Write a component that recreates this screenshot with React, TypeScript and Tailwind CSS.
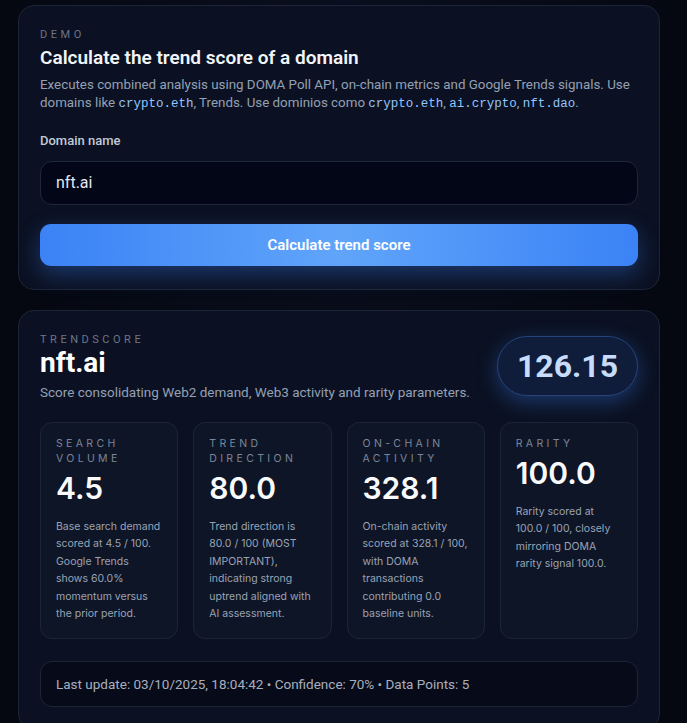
import React from "react";

const metrics = [
  {
    label: ["SEARCH", "VOLUME"],
    value: "4.5",
    text: "Base search demand scored at 4.5 / 100. Google Trends shows 60.0% momentum versus the prior period.",
  },
  {
    label: ["TREND", "DIRECTION"],
    value: "80.0",
    text: "Trend direction is 80.0 / 100 (MOST IMPORTANT), indicating strong uptrend aligned with AI assessment.",
  },
  {
    label: ["ON-CHAIN", "ACTIVITY"],
    value: "328.1",
    text: "On-chain activity scored at 328.1 / 100, with DOMA transactions contributing 0.0 baseline units.",
  },
  {
    label: ["RARITY"],
    value: "100.0",
    text: "Rarity scored at 100.0 / 100, closely mirroring DOMA rarity signal 100.0.",
  },
];

function Code({ children }: { children: React.ReactNode }) {
  return (
    <span className="font-['Liberation_Mono',monospace] text-[12.5px] text-[#93c5fd]">
      {children}
    </span>
  );
}

export default function App() {
  return (
    <div className="min-h-screen bg-[radial-gradient(ellipse_at_top,#0a0f1f,#050811_70%)] px-[18px] pt-[5px] pb-8 font-['Roboto',sans-serif] text-white">
      {/* Demo form */}
      <section className="w-[642px] rounded-[16px] border border-[#1c2536] bg-[#0b1122] px-[21px] pt-[22px] pb-[23px]">
        <div className="text-[11px] leading-[14px] tracking-[0.32em] text-[#6b7588]">DEMO</div>
        <h1 className="mt-[3px] text-[19px] leading-[26px] font-semibold text-[#f1f5f9]">
          Calculate the trend score of a domain
        </h1>
        <p className="mt-[5px] text-[13.35px] leading-[18px] text-[#94a0b4]">
          Executes combined analysis using DOMA Poll API, on-chain metrics and Google Trends signals. Use
          domains like <Code>crypto.eth</Code>, Trends. Use dominios como <Code>crypto.eth</Code>,{" "}
          <Code>ai.crypto</Code>, <Code>nft.dao</Code>.
        </p>

        <label className="mt-[20px] block text-[13px] leading-[16px] font-medium text-[#c3cad6]">
          Domain name
        </label>
        <div className="mt-[12px] flex h-[44px] items-center rounded-[12px] border border-[#1e2738] bg-[#030616] px-[15px] text-[16px] text-[#e2e8f0]">
          nft.ai
        </div>

        <button className="mt-[19px] flex h-[42px] w-full items-center justify-center rounded-[11px] bg-[linear-gradient(90deg,#3b82f6,#60a5fa_50%,#3b82f6)] text-[15px] font-semibold text-white shadow-[0_8px_22px_rgba(59,130,246,0.35)]">
          Calculate trend score
        </button>
      </section>

      {/* Trend score */}
      <section className="mt-[20px] w-[642px] rounded-[16px] border border-[#1c2536] bg-[#0b1122] px-[21px] pt-[22px] pb-[22px]">
        <div className="flex items-start justify-between">
          <div>
            <div className="text-[11px] leading-[14px] tracking-[0.32em] text-[#6b7588]">TRENDSCORE</div>
            <div className="text-[28px] leading-[32px] font-bold text-white">nft.ai</div>
            <p className="mt-[4px] text-[13.5px] leading-[18px] text-[#94a0b4]">
              Score consolidating Web2 demand, Web3 activity and rarity parameters.
            </p>
          </div>
          <div className="mt-[3px] flex h-[60px] w-[141px] items-center justify-center rounded-full border border-[#24437a] bg-[#0f1c3a] shadow-[0_6px_20px_rgba(59,130,246,0.35)]">
            <span className="text-[32px] font-bold text-[#c7dcfb]">126.15</span>
          </div>
        </div>

        <div className="mt-[21px] grid grid-cols-4 items-stretch gap-[15px] font-['Inter',sans-serif]">
          {metrics.map((m) => (
            <div
              key={m.value}
              className="rounded-[12px] border border-[#1c2536] bg-[#0e1527] px-[15px] pt-[13px] pb-[16px]"
            >
              <div className="text-[10.5px] leading-[15px] tracking-[0.32em] text-[#7b8598]">
                {m.label.map((l) => (
                  <div key={l}>{l}</div>
                ))}
              </div>
              <div className="mt-[3px] text-[30px] leading-[38px] font-semibold text-[#f8fafc]">
                {m.value}
              </div>
              <p className="mt-[11px] text-[10.5px] leading-[17.4px] text-[#9aa3b4]">{m.text}</p>
            </div>
          ))}
        </div>

        <div className="mt-[22px] flex h-[46px] items-center rounded-[12px] border border-[#1c2536] bg-[#070b19] px-[15px] text-[13.5px] text-[#a7afbd]">
          Last update: 03/10/2025, 18:04:42 • Confidence: 70% • Data Points: 5
        </div>
      </section>
    </div>
  );
}
